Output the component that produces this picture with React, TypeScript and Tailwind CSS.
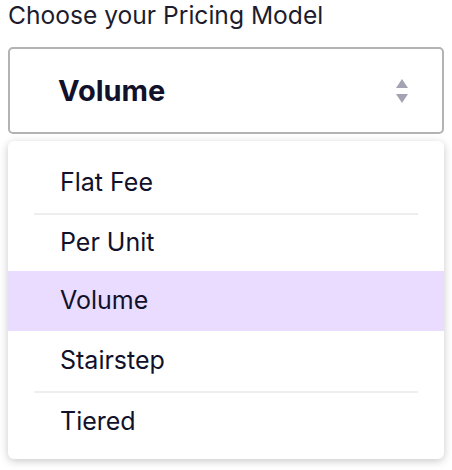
const options = [
  { label: "Flat Fee", h: "h-[62px] border-b-2 border-[#eeeeee]" },
  { label: "Per Unit", h: "h-[56px]" },
  { label: "Volume", h: "h-[60px]" },
  { label: "Stairstep", h: "h-[62px] border-b-2 border-[#eeeeee]" },
  { label: "Tiered", h: "h-[58px]" },
];

export default function App() {
  const selected = "Volume";
  return (
    <div className="bg-white w-[452px] h-[470px] px-2 font-['Inter',sans-serif] text-[#11112b]">
      <p className="text-[24.6px] leading-[30px] text-[#1c1c2e]">Choose your Pricing Model</p>

      <div className="mt-[17px] h-[87px] border-2 border-[#b3b3b3] rounded-[5px] flex items-center justify-between pl-[48px] pr-[33px]">
        <span className="text-[29px] font-bold">{selected}</span>
        <svg width="14" height="24" viewBox="0 0 14 24" className="text-[#a3a3b3]">
          <path d="M7 0 L13 9 L1 9 Z" fill="currentColor" />
          <path d="M1 15 L13 15 L7 24 Z" fill="currentColor" />
        </svg>
      </div>

      <ul className="mt-[7px] bg-white rounded-[6px] shadow-[0_2px_8px_rgba(0,0,0,0.22)] pt-3 pb-2">
        {options.map((o) => (
          <li key={o.label} className={o.label === selected ? "bg-[#eadcfe]" : ""}>
            <div className={"mx-[26px] flex items-center pl-[26px] text-[25px] " + o.h}>
              {o.label}
            </div>
          </li>
        ))}
      </ul>
    </div>
  );
}
